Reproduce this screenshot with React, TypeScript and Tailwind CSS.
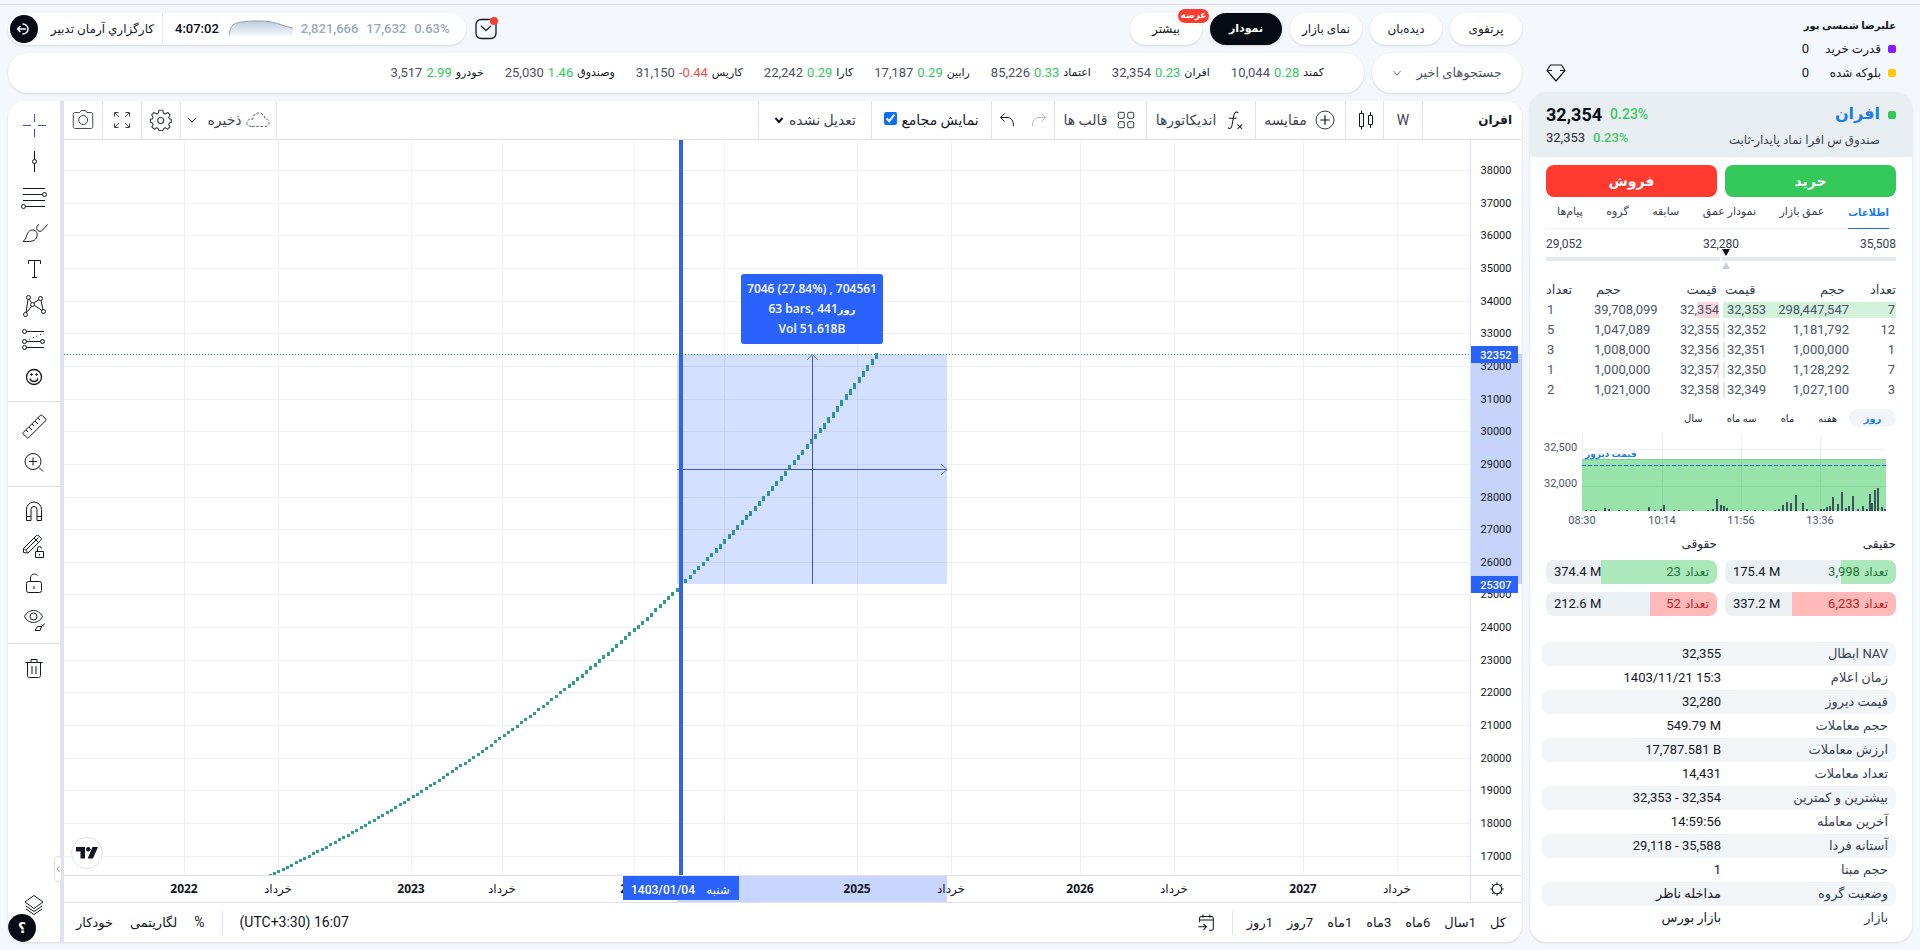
import React, { useState } from "react";

const tickers = [
  { name: "کمند", change: "0.28", price: "10,044" },
  { name: "افران", change: "0.23", price: "32,354" },
  { name: "اعتماد", change: "0.33", price: "85,226" },
  { name: "رابین", change: "0.29", price: "17,187" },
  { name: "کارا", change: "0.29", price: "22,242" },
  { name: "کاریس", change: "-0.44", price: "31,150" },
  { name: "وصندوق", change: "1.46", price: "25,030" },
  { name: "خودرو", change: "2.99", price: "3,517" },
];

const buyOrders = [
  { count: "7", volume: "298,447,547", price: "32,353", fill: 100 },
  { count: "12", volume: "1,181,792", price: "32,352", fill: 1 },
  { count: "1", volume: "1,000,000", price: "32,351", fill: 1 },
  { count: "7", volume: "1,128,292", price: "32,350", fill: 1 },
  { count: "3", volume: "1,027,100", price: "32,349", fill: 1 },
];

const sellOrders = [
  { count: "1", volume: "39,708,099", price: "32,354", fill: 13 },
  { count: "5", volume: "1,047,089", price: "32,355", fill: 1 },
  { count: "3", volume: "1,008,000", price: "32,356", fill: 1 },
  { count: "1", volume: "1,000,000", price: "32,357", fill: 1 },
  { count: "2", volume: "1,021,000", price: "32,358", fill: 1 },
];

const details = [
  ["NAV ابطال", "32,355"],
  ["زمان اعلام", "1403/11/21 15:3"],
  ["قیمت دیروز", "32,280"],
  ["حجم معاملات", "549.79 M"],
  ["ارزش معاملات", "17,787.581 B"],
  ["تعداد معاملات", "14,431"],
  ["بیشترین و کمترین", "32,353 - 32,354"],
  ["آخرین معامله", "14:59:56"],
  ["آستانه فردا", "29,118 - 35,588"],
  ["حجم مبنا", "1"],
  ["وضعیت گروه", "مداخله ناظر"],
  ["بازار", "بازار بورس"],
];

// Chart scale: plot starts at price 38000, 30px under its top edge
const STEP = 32.65;
const priceY = (price: number) => 30 + ((38000 - price) / 1000) * STEP;
const prices = Array.from({ length: 22 }, (_, i) => 38000 - i * 1000);
const timeMarks = [
  { x: 120, label: "2022", year: true },
  { x: 214, label: "خرداد", year: false },
  { x: 347, label: "2023", year: true },
  { x: 438, label: "خرداد", year: false },
  { x: 570, label: "2024", year: true },
  { x: 660, label: "", year: false },
  { x: 793, label: "2025", year: true },
  { x: 887, label: "خرداد", year: false },
  { x: 1016, label: "2026", year: true },
  { x: 1110, label: "خرداد", year: false },
  { x: 1239, label: "2027", year: true },
  { x: 1333, label: "خرداد", year: false },
];

const fundPrice = (x: number) => {
  const u = x - 617;
  return 25300 * Math.exp(0.001193 * u + 0.0000003393 * u * u);
};
const BAR = 4.33;
const bars = Array.from({ length: 142 }, (_, i) => {
  const x = 811 - i * BAR;
  const top = priceY(fundPrice(x + BAR / 2));
  const bottom = priceY(fundPrice(x - BAR / 2));
  return { x: Math.round(x), y: Math.round(top), h: Math.max(3, Math.round(bottom - top)) };
});

const miniVolumes = [
  [3, 1], [8, 1], [13, 1], [22, 3], [26, 2], [36, 1], [44, 1], [55, 1], [66, 4], [72, 1], [78, 2], [81, 6], [91, 1], [96, 1],
  [110, 1], [125, 1], [130, 2], [134, 12], [138, 6], [141, 5], [144, 3], [150, 1], [158, 1], [164, 1], [172, 1], [180, 1],
  [192, 1], [196, 2], [200, 6], [204, 9], [208, 8], [213, 16], [220, 8], [224, 2], [230, 1], [238, 2], [241, 2], [244, 4],
  [247, 5], [250, 14], [255, 7], [259, 19], [263, 3], [266, 5], [270, 15], [275, 2], [280, 5], [284, 2], [287, 17],
  [289, 8], [292, 21], [295, 23], [299, 4], [302, 2],
];

function Icon({ children, className = "h-7 w-7" }: { children: React.ReactNode; className?: string }) {
  return (
    <svg viewBox="0 0 28 28" className={`shrink-0 ${className}`} fill="none" stroke="currentColor" aria-hidden="true">
      {children}
    </svg>
  );
}

function ToolButton({ label, children, className = "text-[#131722]" }: { label: string; children: React.ReactNode; className?: string }) {
  return (
    <button type="button" aria-label={label} className={`flex h-9 w-full items-center justify-center ${className}`}>
      {children}
    </button>
  );
}

function Separator() {
  return <div className="my-1.5 h-px w-full bg-[#dcdfe7]" />;
}

function DrawingToolbar() {
  return (
    <div className="relative flex w-14 shrink-0 flex-col items-center rounded-bl-2xl rounded-tl-2xl border-r-4 border-[#e0e3eb] bg-white pt-1.5">
      <ToolButton label="Cross" className="text-[#3a5bc7]">
        <Icon><path d="M14.5 3v8M14.5 18v8M3 14.5h8M18 14.5h8" /></Icon>
      </ToolButton>
      <ToolButton label="Trend line">
        <Icon><path d="M14.5 4v8.500M14.500 16.500V25" /><circle cx="14.500" cy="14.500" r="2" /></Icon>
      </ToolButton>
      <ToolButton label="Fib retracement">
        <Icon>
          <path d="M3 5.500h22M3 11.500h19.500M3 17.500h22M5.500 23.500H25" />
          <circle cx="24.500" cy="11.500" r="2" /><circle cx="3.500" cy="23.500" r="2" />
        </Icon>
      </ToolButton>
      <ToolButton label="Brush">
        <Icon>
          <path d="M3 22.500c3-2 3-5 4.500-8 2-4 6.500-4.500 8.500-2s1.500 6-1.500 8.500c-2.500 1.800-6 1.500-11.500 1.500z" />
          <path d="M19 5.500c-3 1.500-3 5-.5 6.500 2 1 4-.5 5-2l4-4.500" />
        </Icon>
      </ToolButton>
      <ToolButton label="Text">
        <Icon><path d="M8.500 9V5.500h12V9M14.500 5.500v17M12 22.500h5" /></Icon>
      </ToolButton>
      <ToolButton label="Pattern">
        <Icon>
          <circle cx="8.500" cy="6.500" r="2" /><circle cx="20.500" cy="7.500" r="2" /><circle cx="12.500" cy="13.500" r="2" />
          <circle cx="5.500" cy="23.500" r="2" /><circle cx="23.500" cy="20.500" r="2" />
          <path d="M8 8.500L6 21.500M9.500 8.500l2 3M11.500 15.500l-5 6M14 12l5-3.500M21 9.500l2 9M14.500 14.500l7.500 4.800" />
        </Icon>
      </ToolButton>
      <ToolButton label="Prediction">
        <Icon>
          <circle cx="4.500" cy="4.500" r="2" /><circle cx="4.500" cy="14.500" r="2" /><circle cx="22.500" cy="14.500" r="2" /><circle cx="4.500" cy="20.500" r="2" />
          <path d="M6.500 4.500H24M6.500 14.500h14M6.500 20.500H24" />
          <path d="M9 12.500L24 6" strokeDasharray="1 3" />
        </Icon>
      </ToolButton>
      <ToolButton label="Icons">
        <Icon>
          <circle cx="14" cy="14" r="7.500" strokeWidth="1.300" />
          <path d="M10 15.500c1 4 7 4 8 0" strokeWidth="1.300" />
          <circle cx="11.500" cy="11.500" r=".8" fill="currentColor" /><circle cx="16.500" cy="11.500" r=".8" fill="currentColor" />
        </Icon>
      </ToolButton>
      <Separator />
      <ToolButton label="Measure">
        <Icon>
          <path d="M3.200 20.500L20.500 3.200c.4-.4 1-.4 1.400 0l3.900 3.900c.4.400.4 1 0 1.400L8.500 25.800c-.4.400-1 .4-1.400 0l-3.900-3.900c-.4-.4-.4-1 0-1.400z" />
          <path d="M6 18l2 2M9 15l3 3M12 12l2 2M15 9l3 3M18 6l2 2" />
        </Icon>
      </ToolButton>
      <ToolButton label="Zoom in">
        <Icon><circle cx="13" cy="13.500" r="8" /><path d="M13 9.500v8M9 13.500h8M19 19.500l4 4" /></Icon>
      </ToolButton>
      <Separator />
      <ToolButton label="Magnet">
        <Icon>
          <path d="M6.500 23.500V12.500a7.500 7.500 0 0 1 15 0v11h-4.500v-11a3 3 0 0 0-6 0v11zM6.500 19.500H11M17 19.500h4.500" />
        </Icon>
      </ToolButton>
      <ToolButton label="Stay in drawing mode">
        <Icon>
          <path d="M3.500 19.500v-4L16 3c1-1 2-1 3 0l1.500 1.500c1 1 1 2 0 3L8 20zM4 15.500l4 4M6 17L18.500 4.500M14 5l4.500 4.500" />
          <path d="M15.500 18.500h8v6h-8zM17.500 18.500v-3a2 2 0 0 1 4 0M19.500 21v1.500" />
        </Icon>
      </ToolButton>
      <ToolButton label="Lock drawings">
        <Icon>
          <rect x="6.500" y="12.500" width="15" height="11" rx="2" /><path d="M10.500 12.500V9c0-4 5-5 7-2.500M14 17v3" />
        </Icon>
      </ToolButton>
      <ToolButton label="Hide drawings">
        <Icon>
          <path d="M4.500 11.500c4-8 14-8 18 0-4 8-14 8-18 0z" /><circle cx="13.500" cy="11.500" r="3.500" />
          <path d="M15 25.500l2.500-4h4l-1.500 4zM21 22l4-3.500M21.500 19.500l2 2" />
        </Icon>
      </ToolButton>
      <Separator />
      <ToolButton label="Remove">
        <Icon><path d="M5.500 8.500h17M11 8V5.500h6V8M7.500 8.500v13c0 1 .5 2 2 2h9c1.500 0 2-1 2-2v-13M12 12v8M16 12v8" /></Icon>
      </ToolButton>
      <button
        type="button"
        aria-label="Collapse"
        className="absolute -right-0.5 bottom-[60px] flex h-[26px] w-2 items-center justify-center rounded border border-[#dcdfe7] bg-white"
      >
        <svg viewBox="0 0 4 8" className="h-2 w-1" fill="none" stroke="#9598a1" aria-hidden="true"><path d="M3.500 1L1 4l2.500 3" /></svg>
      </button>
      <div className="mt-auto flex w-full flex-col items-start">
        <ToolButton label="Object tree">
          <Icon><path d="M14 5.500l9 6.500-9 6.500L5 12zM6 16l8 5.500 8-5.500M6 19l8 5.500 8-5.500" /></Icon>
        </ToolButton>
        <button type="button" aria-label="راهنما" className="-mt-2 flex h-7 w-7 items-center justify-center rounded-full bg-[#060b14] text-sm font-bold text-white">
          ؟
        </button>
      </div>
    </div>
  );
}

function ChartToolbar() {
  const cell = "flex items-center justify-center border-r border-[#e0e3eb] text-[14px] text-[#40434e]";
  return (
    <div className="flex h-[39px] items-stretch border-b border-[#e0e3eb]" dir="rtl">
      <div className="flex w-[99px] items-center pr-[10px] text-[12px] font-bold text-[#131722]">افران</div>
      <button type="button" className={`${cell} w-[39px]`}>W</button>
      <button type="button" aria-label="Candles" className={`${cell} w-[38px] text-[#131722]`}>
        <Icon>
          <path d="M17.500 9.500v9h4v-9zM19.500 6v3.500M19.500 18.500V22" />
          <path d="M8.500 7.500v13h4v-13zM10.500 4.500v3M10.500 20.500v3" />
        </Icon>
      </button>
      <button type="button" className={`${cell} w-[90px] gap-1.5`}>
        <Icon className="h-6 w-6 text-[#131722]"><circle cx="14" cy="14" r="10.500" /><path d="M14 8.500v11M8.500 14h11" strokeWidth="1.400" /></Icon>
        <span>مقایسه</span>
      </button>
      <button type="button" className={`${cell} w-[109px] gap-1.5`}>
        <Icon className="h-6 w-6 text-[#131722]">
          <path d="M19 6c-1-2-4-2-5 2l-2.500 13c-.7 3-2.500 3.500-4.500 2M8 12h9M18 19l5.500 5.500M23.500 19L18 24.500" strokeWidth="1.200" />
        </Icon>
        <span>اندیکاتورها</span>
      </button>
      <button type="button" className={`${cell} w-[92px] gap-1.5`}>
        <Icon className="h-6 w-6 text-[#131722]">
          <rect x="5" y="5" width="7" height="7" rx="1.500" /><rect x="16" y="5" width="7" height="7" rx="1.500" />
          <rect x="5" y="16" width="7" height="7" rx="1.500" /><rect x="16" y="16" width="7" height="7" rx="1.500" />
        </Icon>
        <span>قالب ها</span>
      </button>
      <div className={`${cell} w-[63px] gap-1`}>
        <button type="button" aria-label="Redo" className="text-[#b8bbc4]">
          <Icon><path d="M7.500 20c0-5 2-8.500 6.500-8.500h6.500M16.500 7.500l4 4-4 4" /></Icon>
        </button>
        <button type="button" aria-label="Undo" className="text-[#131722]">
          <Icon><path d="M20.500 20c0-5-2-8.500-6.500-8.500H7.500M11.500 7.500l-4 4 4 4" /></Icon>
        </button>
      </div>
      <label className={`${cell} w-[120px] gap-1`}>
        <span className="text-[#131722]">نمایش مجامع</span>
        <input type="checkbox" defaultChecked className="-mt-1 h-[13px] w-[13px] accent-[#0b6ff5]" />
      </label>
      <div className={`${cell} w-[114px] gap-1 border-l`}>
        <select aria-label="تعدیل" className="appearance-none bg-transparent text-[14px] focus:outline-none">
          <option>تعدیل نشده</option>
        </select>
        <svg viewBox="0 0 10 10" className="h-2.5 w-2.5" fill="none" stroke="#131722" strokeWidth="2" aria-hidden="true"><path d="M1.500 3L5 7l3.500-4" /></svg>
      </div>

      <div className="mr-auto flex items-stretch" dir="ltr">
        <button type="button" aria-label="Snapshot" className={`${cell} w-[39px]`}>
          <Icon>
            <path d="M8.500 6.500h2l1.500-2h4.500l1.500 2h4.500c1 0 2 .8 2 2v12c0 1-.8 2-2 2h-17c-1 0-2-.8-2-2v-12c0-1.200.8-2 2-2z" transform="translate(1 0) scale(.93 1)" /><circle cx="14.200" cy="14" r="4.500" />
          </Icon>
        </button>
        <button type="button" aria-label="Fullscreen" className={`${cell} w-[39px]`}>
          <Icon><path d="M6.500 10.500v-4h4M7 7l4 4M17.500 6.500h4v4M21 7l-4 4M6.500 17.500v4h4M7 21l4-4M21.500 17.500v4h-4M21 21l-4-4" /></Icon>
        </button>
        <button type="button" aria-label="Settings" className={`${cell} w-[39px]`}>
          <Icon>
            <path
              d="M12 4.500h4l.8 3 1.800.8 2.700-1.500 2.400 2.400-1.500 2.800.8 1.500 2 .5v3l-2 .8-.8 1.700 1.300 2.600-2.400 2.300-2.500-1.400-1.800.8-.8 2h-4l-.8-2-1.800-.8-2.500 1.400-2.400-2.300L5.800 19.500 5 17.800l-2-.8v-3l2-.5.8-1.500-1.500-2.800 2.400-2.400 2.700 1.500 1.800-.8z"
              transform="translate(.6 0) scale(.95)" strokeLinejoin="round" strokeWidth="1.200"
            />
            <circle cx="13.700" cy="14.500" r="3" strokeWidth="1.200" />
          </Icon>
        </button>
        <button type="button" className={`${cell} w-24 gap-1`}>
          <svg viewBox="0 0 10 10" className="mr-1.5 h-2.5 w-2.5" fill="none" stroke="#131722" aria-hidden="true"><path d="M1 3l4 4 4-4" /></svg>
          <span>ذخیره</span>
          <Icon className="h-7 w-6">
            <path d="M7 21.500h15c3 0 5-2 5-4.500s-2-4.500-5-4.500C21.500 7 17 5 13 6c-3 .8-5 3.500-5 7-4-.5-7 1.500-7 4.500 0 2.500 2.500 4 6 4z" strokeDasharray="3 2" />
          </Icon>
        </button>
      </div>
    </div>
  );
}

function Plot() {
  return (
    <div className="relative min-h-[735px] min-w-0 flex-1 overflow-hidden">
      <svg className="absolute inset-0 h-full w-full" aria-label="chart">
        <g stroke="#f0f1f4">
          {timeMarks.map((t) => (
            <line key={t.x} x1={t.x + 0.5} x2={t.x + 0.5} y1="0" y2="100%" />
          ))}
          {prices.map((p) => (
            <line key={p} x1="0" x2="100%" y1={Math.round(priceY(p)) + 0.5} y2={Math.round(priceY(p)) + 0.5} />
          ))}
        </g>
        <g fill="#2f9c8d">
          {bars.map((b) => (
            <rect key={b.x} x={b.x} y={b.y} width="3" height={b.h} />
          ))}
        </g>
        <rect x="613" y="214" width="270" height="230" fill="#2962ff" fillOpacity=".2" />
        <line x1="0" x2="100%" y1="214.500" y2="214.500" stroke="#1f9584" strokeDasharray="1 2" />
        <g stroke="#3a55c4" fill="none">
          <path d="M613 329.500h269M748.500 444V216" />
          <path d="M877 324l6 5.500-6 5.500M743 220l5.500-5.500 5.500 5.500" stroke="#4f73e6" />
        </g>
        <rect x="615" y="0" width="4" height="100%" fill="#3463ea" />
      </svg>
      <div className="absolute left-[677px] top-[134px] flex h-[70px] w-[142px] flex-col items-center justify-center rounded-[3px] bg-[#2962ff] font-['Open_Sans','DejaVu_Sans',sans-serif] text-[12px] font-semibold leading-5 text-white">
        <span>7046 (27.84%) , 704561</span>
        <span>
          63 bars, 441<span className="text-[10px]">روز</span>
        </span>
        <span>Vol 51.618B</span>
      </div>
      <div className="absolute bottom-[6px] left-[7px] flex h-8 w-8 items-center justify-center rounded-full border border-[#e0e3eb] bg-white">
        <svg viewBox="0 0 22 12" className="h-3 w-[22px]" fill="#131722" aria-hidden="true">
          <path d="M0 0h9v11.500H4.500V4.500H0z" /><circle cx="12.300" cy="2.300" r="2.200" /><path d="M16.500 0H22l-5 11.500h-5.300z" />
        </svg>
      </div>
    </div>
  );
}

function PriceAxis() {
  return (
    <div className="relative w-[52px] shrink-0 overflow-hidden border-l border-[#e0e3eb]">
      <svg className="absolute inset-0 h-full w-full">
        <rect x="0" y="214" width="52" height="230" fill="#c6d4fc" />
        <g className="text-[11px]" fill="#131722" textAnchor="middle">
          {prices.map((p) => (
            <text key={p} x="25" y={Math.round(priceY(p)) + 4}>{p}</text>
          ))}
        </g>
        <rect x="0" y="206" width="47" height="17" fill="#2962ff" />
        <rect x="0" y="436" width="47" height="17" fill="#2962ff" />
        <g className="text-[11px] font-medium" fill="#fff" textAnchor="middle">
          <text x="25" y="219">32352</text>
          <text x="25" y="449">25307</text>
        </g>
      </svg>
    </div>
  );
}

function TimeAxis() {
  return (
    <div className="flex h-7 border-y border-[#e0e3eb]">
      <div className="relative flex-1 overflow-hidden">
        <svg className="absolute inset-0 h-full w-full">
          <rect x="613" y="0" width="270" height="27" fill="#c8d6ff" />
          <g fill="#131722" textAnchor="middle">
            {timeMarks.map((t) => (
              <text key={t.x} x={t.x} y="17" className={t.year ? "font-['Open_Sans',sans-serif] text-[12px] font-bold" : "text-[12px]"}>
                {t.label}
              </text>
            ))}
          </g>
          <rect x="559" y="0" width="116" height="24" fill="#2962ff" />
          <g fill="#fff" textAnchor="middle">
            <text x="599" y="18" className="text-[12px] font-medium">1403/01/04</text>
            <text x="654" y="18" className="text-[12px]">شنبه</text>
          </g>
        </svg>
      </div>
      <button type="button" aria-label="Axis settings" className="flex w-[52px] items-center justify-center border-l border-[#e0e3eb] text-[#131722]">
        <Icon className="h-6 w-6">
          <circle cx="14" cy="14" r="5.500" strokeWidth="1.300" />
          <path d="M14 6v2.500M14 19.500V22M6 14h2.500M19.500 14H22M8.300 8.300l1.800 1.800M17.900 17.900l1.800 1.800M8.300 19.700l1.800-1.800M17.900 10.100l1.800-1.800" strokeWidth="1.300" />
        </Icon>
      </button>
    </div>
  );
}

function BottomBar() {
  return (
    <div className="flex h-[39px] items-center justify-between pl-3 pr-4 text-[13px] text-[#131722]">
      <div className="flex items-center gap-[17px]">
        <button type="button">خودکار</button>
        <button type="button">لگاریتمی</button>
        <button type="button" className="text-[14px]">%</button>
        <div className="h-6 w-px bg-[#e0e3eb]" />
        <button type="button" className="text-[14px]">(UTC+3:30) 16:07</button>
      </div>
      <div className="flex items-center gap-[14px]" dir="rtl">
        {["کل", "1سال", "6ماه", "3ماه", "1ماه", "7روز", "1روز"].map((r) => (
          <button key={r} type="button">{r}</button>
        ))}
        <div className="h-6 w-px bg-[#e0e3eb]" />
        <button type="button" aria-label="Go to date">
          <Icon className="h-6 w-6">
            <path d="M6.500 13V8.500c0-1 .8-2 2-2h12c1 0 2 .8 2 2v12c0 1-.8 2-2 2h-3M6.500 10.500h16M10.500 4v4M18.500 4v4M5 18.500h9M11 15l3.500 3.500L11 22" strokeWidth="1.200" />
          </Icon>
        </button>
      </div>
    </div>
  );
}

function TopNav() {
  const pill = "relative flex h-8 w-[72px] items-center justify-center rounded-full shadow-sm";
  return (
    <div className="flex items-start justify-between">
      <nav className="flex gap-2 text-[12px]">
        <a href="#portfolio" className={`${pill} bg-white text-[#131722]`}>پرتفوی</a>
        <a href="#watch" className={`${pill} bg-white text-[#131722]`}>دیده‌بان</a>
        <a href="#market" className={`${pill} bg-white text-[#131722]`}>نمای بازار</a>
        <a href="#chart" className={`${pill} bg-[#060b14] text-[11px] font-bold text-white`}>نمودار</a>
        <a href="#more" className={`${pill} bg-white text-[#131722]`}>
          بیشتر
          <span className="absolute -right-[7px] -top-1 flex h-[14px] w-[31px] items-center justify-center rounded-full bg-[#ff3b30] text-[9px] font-bold text-white">
            عرضه
          </span>
        </a>
      </nav>
      <div className="flex items-center gap-2" dir="ltr">
        <div className="flex h-8 items-center rounded-full bg-white pl-0.5 pr-4 shadow-sm">
          <button type="button" aria-label="خروج" className="flex h-7 w-7 items-center justify-center rounded-full bg-[#060b14] text-white">
            <svg viewBox="0 0 16 16" className="h-4 w-4" fill="none" stroke="currentColor" strokeWidth="1.500" strokeLinecap="round" strokeLinejoin="round" aria-hidden="true">
              <path d="M7 3a5 5 0 1 1 0 10M9.500 8H1.500M4 5.500L1.500 8 4 10.500" />
            </svg>
          </button>
          <span className="w-[124px] whitespace-nowrap pr-2 text-right text-[12px] text-[#131722]" dir="rtl">كارگزاري آرمان تدبير</span>
          <div className="h-8 w-px bg-[#e6ebf1]" />
          <span className="ml-3 text-[13px] font-medium text-[#060b14]">4:07:02</span>
          <svg viewBox="0 0 64 18" className="ml-[10px] mr-2 h-[18px] w-16" aria-hidden="true">
            <defs>
              <linearGradient id="spark" x1="0" y1="0" x2="0" y2="1">
                <stop offset="0" stopColor="#bccbdd" />
                <stop offset="1" stopColor="#fff" />
              </linearGradient>
            </defs>
            <path d="M0 18C1 8 3 4 8 3c7-2 24-3 34-1 8 1 14 5 22 6v10z" fill="url(#spark)" />
            <path d="M0 16C1 8 3 4 8 3c7-2 24-3 34-1 8 1 14 5 22 6" fill="none" stroke="#8fa5c0" />
          </svg>
          <span className="flex gap-2 text-[13px] font-medium text-[#9aa9bf]">
            <span>2,821,666</span>
            <span>17,632</span>
            <span>0.63%</span>
          </span>
        </div>
        <button type="button" aria-label="پیام‌ها" className="relative h-6 w-6 text-[#131722]">
          <svg viewBox="0 0 24 24" className="h-6 w-6" fill="none" stroke="currentColor" strokeWidth="1.300" aria-hidden="true">
            <rect x="2" y="2.500" width="20" height="19" rx="5" /><path d="M7 9l5 4.500L17 9" />
          </svg>
          <span className="absolute right-0 top-0 h-2 w-2 rounded-full bg-[#ff3b30]" />
        </button>
      </div>
    </div>
  );
}

function TickerRow() {
  return (
    <div className="flex gap-2">
      <button type="button" className="flex h-10 w-[150px] items-center justify-between rounded-full bg-white px-5 text-[13px] text-[#4b5563] shadow-sm">
        جستجوهای اخیر
        <svg viewBox="0 0 10 10" className="h-2.5 w-2.5" fill="none" stroke="#6b7280" aria-hidden="true"><path d="M1.500 3L5 7l3.500-4" /></svg>
      </button>
      <div className="flex h-10 flex-1 items-center gap-[21px] rounded-full bg-white pr-10 shadow-sm">
        {tickers.map((t) => (
          <a key={t.name} href="#symbol" className="flex items-center gap-1">
            <span className="text-[11px] text-[#131722]">{t.name}</span>
            <span dir="ltr" className={`text-[13px] ${t.change.startsWith("-") ? "text-[#ff4a40]" : "text-[#34c759]"}`}>{t.change}</span>
            <span className="text-[13px] text-[#4b5160]">{t.price}</span>
          </a>
        ))}
      </div>
    </div>
  );
}

function OrderTable({ side }: { side: "buy" | "sell" }) {
  const isBuy = side === "buy";
  const rows = isBuy ? buyOrders : sellOrders;
  const head = "p-0 text-[13px] font-normal text-[#374151]";
  return (
    <table className="w-full table-fixed border-separate border-spacing-x-0 border-spacing-y-1 text-[13px] leading-4 text-[#4a5568]" dir="ltr">
      <thead>
        <tr className="h-[17px]">
          {isBuy ? (
            <>
              <th className={`${head} w-12 pl-0.5 text-left`}>قیمت</th>
              <th className={`${head} pr-1 text-right`}>حجم</th>
              <th className={`${head} w-[47px] text-right`}>تعداد</th>
            </>
          ) : (
            <>
              <th className={`${head} w-12 text-left`}>تعداد</th>
              <th className={`${head} pl-0.5 text-left`}>حجم</th>
              <th className={`${head} w-12 pr-0.5 text-right`}>قیمت</th>
            </>
          )}
        </tr>
      </thead>
      <tbody>
        {rows.map((r) => (
          <tr
            key={r.price}
            className="h-4"
            style={{
              background: isBuy
                ? `linear-gradient(to right, #d3f2dc ${r.fill}%, transparent ${r.fill}%)`
                : `linear-gradient(to left, #f8d9dd ${r.fill}%, transparent ${r.fill}%)`,
            }}
          >
            {isBuy ? (
              <>
                <td className="p-0 pl-1">{r.price}</td>
                <td className="p-0 text-right">{r.volume}</td>
                <td className="p-0 pr-px text-right">{r.count}</td>
              </>
            ) : (
              <>
                <td className="p-0 pl-px">{r.count}</td>
                <td className="p-0">{r.volume}</td>
                <td className="p-0 text-right">{r.price}</td>
              </>
            )}
          </tr>
        ))}
      </tbody>
    </table>
  );
}

function MiniChart() {
  return (
    <div dir="ltr" className="-ml-1 mt-[3px]">
      <svg viewBox="0 0 354 100" className="block h-[100px] w-[354px] text-[11px]" aria-label="intraday">
        <g stroke="#eceff3">
          <path d="M40.500 4v77M120.500 4v77M199.500 4v77M278.500 4v77M40 19.500h304" />
        </g>
        <rect x="40" y="29" width="304" height="52" fill="#98e3a9" />
        <path d="M40 29.500h304" stroke="#7fd494" />
        <path d="M120.500 29v52M199.500 29v52M278.500 29v52M40 56.500h304" stroke="#8cd79e" />
        <g fill="#38575a">
          {miniVolumes.map(([x, h]) => (
            <rect key={x} x={40 + x} y={81 - h} width="2" height={h} />
          ))}
        </g>
        <path d="M40 35.500h304" stroke="#1a6fe0" strokeDasharray="4 2" />
        <g fill="#4a5568">
          <text x="2" y="21">32,500</text>
          <text x="2" y="57">32,000</text>
          <g textAnchor="middle">
            <text x="40" y="94">08:30</text>
            <text x="120" y="94">10:14</text>
            <text x="199" y="94">11:56</text>
            <text x="278" y="94">13:36</text>
          </g>
        </g>
        <text x="43" y="27" fill="#1a7cf0" className="text-[9px] font-bold">قیمت دیروز</text>
      </svg>
    </div>
  );
}

function ShareBar({ count, volume, fill, buy }: { count: string; volume: string; fill: number; buy: boolean }) {
  return (
    <div className="relative flex h-6 items-center justify-between overflow-hidden rounded-lg bg-[#ebf0f5] px-2 text-[12px]">
      <div className={`absolute inset-y-0 right-0 ${buy ? "bg-[#abe9ba]" : "bg-[#ffb9b9]"}`} style={{ width: `${fill}%` }} />
      <span className={`relative flex items-center gap-1 ${buy ? "text-[#22763c]" : "text-[#c5221f]"}`}>
        <span>تعداد</span>
        <span className="text-[13px]">{count}</span>
      </span>
      <span className="relative text-[13px] text-[#131722]" dir="ltr">{volume}</span>
    </div>
  );
}

function SymbolPanel() {
  const [tab, setTab] = useState("اطلاعات");
  const [period, setPeriod] = useState("روز");

  return (
    <section className="flex flex-1 flex-col overflow-hidden rounded-2xl bg-white pb-3 shadow-sm">
      <div className="flex h-[65px] items-start justify-between bg-[#e9eef3] px-4 pt-2">
        <div className="flex gap-2">
          <span className="mt-[11px] h-2 w-2 rounded-[2px] bg-[#34c759]" />
          <div>
            <h1 className="h-7 text-[16px] font-bold leading-7 text-[#1a7cf0]">افران</h1>
            <p className="text-[12px] leading-6 text-[#374151]">صندوق س افرا نماد پایدار-ثابت</p>
          </div>
        </div>
        <div dir="ltr">
          <div className="flex h-7 items-center gap-2">
            <span className="text-[18px] font-bold text-[#060b14]">32,354</span>
            <span className="text-[14px] font-medium text-[#3fc862]">0.23%</span>
          </div>
          <div className="flex h-5 items-center gap-2 text-[13px]">
            <span className="text-[#1f2937]">32,353</span>
            <span className="font-medium text-[#3fc862]">0.23%</span>
          </div>
        </div>
      </div>

      <div className="flex flex-col px-4 pt-2">
        <div className="grid grid-cols-2 gap-2">
          <button type="button" className="h-8 rounded-lg bg-[#34c759] text-[14px] font-bold text-white">خرید</button>
          <button type="button" className="h-8 rounded-lg bg-[#ff3b30] text-[14px] font-bold text-white">فروش</button>
        </div>

        <div className="flex h-8 items-stretch justify-between border-b border-[#eef1f5] pl-[11px] pr-[7px] text-[11px] text-[#374151]">
          {["اطلاعات", "عمق بازار", "نمودار عمق", "سابقه", "گروه", "پیام‌ها"].map((t) => (
            <button
              key={t}
              type="button"
              onClick={() => setTab(t)}
              className={t === tab ? "-mb-px border-b border-[#1a6fe0] text-[10px] font-bold text-[#1a7cf0]" : ""}
            >
              {t}
            </button>
          ))}
        </div>

        {/* Allowed price range */}
        <div className="mt-[5px] flex h-5 items-center justify-between text-[12px] text-[#374151]">
          <span>35,508</span>
          <span>32,280</span>
          <span>29,052</span>
        </div>
        <div className="relative mt-[3px] flex h-1 gap-0.5">
          <div className="flex-1 bg-[#e1e8f0]" />
          <div className="flex-1 bg-[#e1e8f0]" />
          <svg viewBox="0 0 8 20" className="absolute left-[176px] -top-2 h-5 w-2" aria-hidden="true">
            <path d="M0 0h8L4 7z" fill="#060b14" /><path d="M0 20h8L4 13z" fill="#c3d0de" />
          </svg>
        </div>

        <div className="mt-4 grid grid-cols-2 gap-1">
          <OrderTable side="buy" />
          <OrderTable side="sell" />
        </div>

        <div className="mt-[7px] flex h-[18px] items-center text-[10px] text-[#1f2937]">
          {["روز", "هفته", "ماه", "سه ماه", "سال"].map((p) => (
            <button
              key={p}
              type="button"
              onClick={() => setPeriod(p)}
              className={`h-[18px] rounded-full ${p === period ? "w-[47px] bg-[#f1f4f8] font-bold text-[#1a7cf0]" : "px-3"}`}
            >
              {p}
            </button>
          ))}
        </div>

        <MiniChart />

        <div className="mt-1 grid grid-cols-2 gap-x-2 gap-y-2 text-[12px]">
          <span className="h-[18px] leading-5 text-[#1f2937]">حقیقی</span>
          <span className="h-[18px] leading-5 text-[#1f2937]">حقوقی</span>
          <ShareBar count="3,998" volume="175.4 M" fill={32} buy />
          <ShareBar count="23" volume="374.4 M" fill={68} buy />
          <ShareBar count="6,233" volume="337.2 M" fill={61} buy={false} />
          <ShareBar count="52" volume="212.6 M" fill={39} buy={false} />
        </div>
      </div>

      <div className="mt-[26px] pl-3 pr-4">
        <table className="w-full table-fixed text-[13px] leading-5">
          <tbody>
            {details.map(([label, value], i) => (
              <tr key={label} className={`h-6 ${i % 2 === 0 ? "[&>*]:bg-[#f2f6f9]" : ""}`}>
                <th scope="row" className="w-[175px] rounded-r-lg p-0 pr-2 text-right font-normal text-[#374151]">{label}</th>
                <td className="rounded-l-lg p-0 text-right text-[#131722]">
                  <bdi>{value}</bdi>
                </td>
              </tr>
            ))}
          </tbody>
        </table>
      </div>
    </section>
  );
}

function AccountSummary() {
  return (
    <div className="px-4 pb-[7px] text-[12px] text-[#131722]">
      <div className="flex h-6 items-center text-[10px] font-bold">علیرضا شمسی پور</div>
      <div className="flex h-6 items-center">
        <span className="ml-[7px] h-2 w-2 rounded-[2px] bg-[#8b1aff]" />
        <span className="w-[72px]">قدرت خرید</span>
        <span className="text-[13px]">0</span>
      </div>
      <div className="flex h-6 items-center">
        <span className="ml-[7px] h-2 w-2 rounded-[2px] bg-[#ffc80a]" />
        <span className="w-[72px]">بلوکه شده</span>
        <span className="text-[13px]">0</span>
        <svg viewBox="0 0 20 18" className="mr-auto h-[18px] w-5" fill="none" stroke="#131722" strokeWidth="1.200" strokeLinejoin="round" aria-hidden="true">
          <path d="M4.500 1h11L19 6.500 10 17 1 6.500zM1 6.500h5M14 6.500h5" />
        </svg>
      </div>
    </div>
  );
}

export default function App() {
  return (
    <div dir="rtl" className="flex min-h-screen flex-col bg-[#f4f7fb] font-[Roboto,'DejaVu_Sans',sans-serif]">
      <div className="h-[5px] border-b border-[#dce1e8]" />
      <div className="flex flex-1 gap-2 p-2">
        <aside className="flex w-[382px] shrink-0 flex-col">
          <AccountSummary />
          <SymbolPanel />
        </aside>
        <main className="flex min-w-0 flex-1 flex-col gap-2">
          <TopNav />
          <TickerRow />
          <div className="flex flex-1 overflow-hidden rounded-2xl bg-white shadow-sm" dir="ltr">
            <DrawingToolbar />
            <div className="flex min-w-0 flex-1 flex-col">
              <ChartToolbar />
              <div className="flex flex-1">
                <Plot />
                <PriceAxis />
              </div>
              <TimeAxis />
              <BottomBar />
            </div>
          </div>
        </main>
      </div>
    </div>
  );
}
